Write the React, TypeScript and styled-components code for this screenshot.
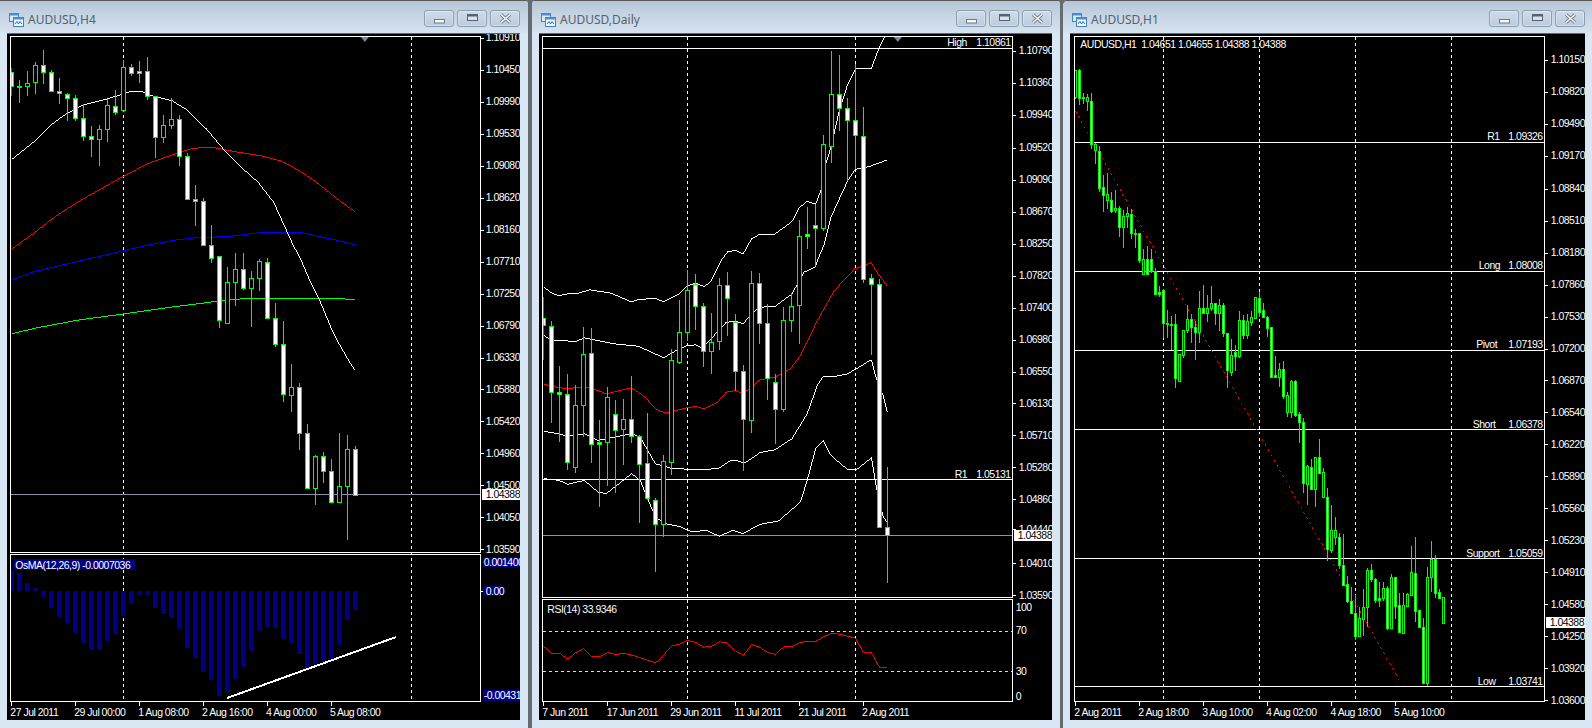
import styled, { createGlobalStyle } from 'styled-components';

type Candle = [high: number, low: number, top: number, bottom: number, filled: 0 | 1];
type Label = [text: string, y: number];
type TimeLabel = [text: string, x: number, tick: number];

const GREEN = '#00ff00';
const NAVY = '#000080';

// page y values, one row per bar
const h4Bars: Candle[] = [
  [67, 95, 71, 85, 1], [79, 102, 85, 86, 1], [70, 95, 82, 85, 0], [61, 93, 64, 81, 0],
  [49, 83, 64, 71, 1], [69, 91, 71, 90, 1], [77, 103, 90, 92, 1], [92, 120, 93, 97, 1],
  [94, 120, 97, 117, 1], [103, 140, 117, 135, 1], [125, 156, 135, 138, 1], [124, 165, 128, 138, 0],
  [98, 141, 104, 128, 0], [89, 114, 105, 111, 1], [59, 109, 66, 109, 0], [63, 75, 66, 72, 1],
  [60, 82, 70, 72, 1], [56, 99, 70, 95, 1], [95, 157, 95, 136, 1], [114, 142, 124, 136, 0],
  [97, 128, 118, 124, 0], [114, 165, 118, 155, 1], [152, 199, 155, 198, 1], [184, 225, 198, 200, 1],
  [197, 244, 200, 244, 1], [224, 262, 244, 257, 1], [255, 327, 255, 319, 1], [266, 322, 281, 322, 0],
  [252, 305, 268, 281, 0], [252, 289, 268, 287, 1], [270, 326, 277, 287, 0], [258, 290, 260, 277, 0],
  [257, 318, 261, 317, 1], [302, 346, 317, 343, 1], [320, 402, 343, 394, 1], [363, 412, 387, 395, 0],
  [383, 450, 387, 433, 1], [424, 488, 433, 488, 1], [455, 505, 456, 488, 0], [452, 483, 456, 471, 1],
  [459, 502, 471, 502, 1], [433, 503, 486, 502, 0], [435, 540, 449, 486, 0], [446, 495, 449, 495, 1],
];

const dailyBars: Candle[] = [
  [296, 359, 317, 324, 1], [320, 423, 325, 392, 1], [365, 442, 392, 394, 1], [373, 470, 394, 462, 1],
  [385, 473, 405, 467, 0], [326, 437, 353, 405, 0], [327, 463, 352, 444, 1], [420, 507, 442, 444, 1],
  [387, 486, 397, 442, 0], [400, 493, 414, 430, 1], [399, 465, 419, 429, 0], [375, 443, 419, 436, 1],
  [435, 523, 436, 464, 1], [413, 500, 463, 498, 1], [498, 572, 500, 524, 1], [455, 537, 461, 524, 0],
  [348, 475, 359, 462, 0], [299, 363, 331, 361, 0], [269, 340, 289, 331, 0], [273, 329, 283, 305, 1],
  [302, 366, 305, 350, 1], [312, 373, 341, 350, 0], [277, 349, 284, 340, 0], [271, 335, 284, 297, 1],
  [313, 391, 321, 370, 1], [364, 471, 370, 419, 1], [270, 433, 282, 420, 0], [272, 343, 282, 322, 1],
  [303, 400, 322, 378, 1], [373, 444, 382, 409, 1], [306, 412, 319, 409, 0], [292, 331, 305, 319, 0],
  [219, 343, 235, 304, 0], [206, 248, 233, 235, 1], [203, 265, 224, 227, 1], [134, 230, 143, 227, 0],
  [50, 162, 93, 145, 0], [54, 130, 93, 107, 1], [97, 180, 107, 119, 1], [63, 168, 119, 134, 1],
  [106, 282, 135, 278, 1], [273, 354, 277, 283, 1], [278, 527, 283, 527, 1], [467, 583, 527, 535, 1],
];

const hourBars: Candle[] = [
  [69, 98, 69, 96, 0], [68, 104, 69, 97, 1], [92, 103, 96, 97, 1], [93, 110, 96, 100, 0],
  [92, 148, 100, 143, 1], [142, 163, 143, 149, 0], [145, 191, 150, 187, 1], [174, 211, 186, 194, 1],
  [172, 208, 193, 199, 0], [191, 212, 199, 210, 1], [189, 212, 207, 209, 0], [205, 236, 207, 226, 1],
  [209, 247, 215, 226, 0], [206, 227, 212, 215, 0], [208, 238, 213, 232, 1], [228, 247, 232, 233, 1],
  [232, 262, 232, 259, 1], [248, 273, 258, 273, 0], [245, 273, 258, 273, 1], [248, 272, 258, 270, 1],
  [267, 293, 270, 293, 1], [285, 296, 291, 293, 1], [288, 337, 289, 322, 1], [309, 337, 322, 323, 1],
  [315, 349, 323, 324, 1], [313, 388, 323, 378, 1], [353, 381, 353, 381, 0], [329, 357, 329, 354, 0],
  [304, 332, 318, 329, 0], [313, 342, 318, 326, 1], [320, 359, 326, 331, 1], [290, 342, 307, 331, 0],
  [284, 312, 307, 312, 1], [294, 321, 307, 312, 0], [285, 310, 302, 307, 0], [302, 324, 302, 312, 1],
  [298, 330, 304, 312, 0], [302, 336, 304, 332, 1], [332, 388, 332, 369, 1], [338, 375, 354, 371, 0],
  [344, 370, 351, 355, 1], [310, 357, 319, 355, 0], [314, 338, 319, 334, 1], [313, 338, 320, 334, 0],
  [310, 325, 316, 321, 0], [296, 317, 296, 317, 0], [291, 316, 297, 311, 1], [302, 317, 309, 316, 1],
  [315, 336, 316, 327, 1], [326, 377, 326, 376, 1], [355, 377, 374, 377, 1], [362, 387, 368, 377, 0],
  [360, 399, 368, 396, 1], [392, 417, 395, 412, 0], [380, 418, 381, 412, 0], [380, 417, 381, 415, 1],
  [412, 443, 414, 422, 1], [418, 493, 422, 483, 1], [465, 505, 466, 484, 0], [459, 490, 467, 489, 1],
  [457, 507, 457, 489, 0], [439, 473, 457, 473, 1], [468, 498, 472, 497, 0], [488, 561, 497, 549, 1],
  [505, 553, 530, 550, 0], [517, 545, 530, 537, 0], [533, 569, 537, 565, 1], [534, 585, 565, 585, 1],
  [576, 603, 584, 601, 1], [587, 614, 601, 613, 1], [595, 640, 613, 636, 1], [607, 637, 618, 636, 0],
  [589, 636, 607, 619, 0], [568, 627, 570, 607, 0], [564, 582, 570, 579, 1], [578, 603, 579, 600, 1],
  [582, 607, 598, 600, 1], [582, 601, 588, 598, 0], [586, 630, 588, 628, 1], [574, 628, 577, 628, 0],
  [577, 619, 577, 606, 1], [593, 633, 605, 632, 1], [593, 634, 605, 633, 0], [593, 606, 594, 606, 0],
  [546, 595, 572, 595, 0], [537, 622, 573, 611, 1], [610, 627, 610, 627, 1], [618, 683, 627, 683, 1],
  [567, 686, 577, 683, 0], [541, 592, 559, 577, 0], [555, 598, 559, 593, 1], [589, 598, 592, 598, 1],
  [597, 624, 597, 623, 0],
];

// histogram ends, in thirds of a pixel below y=520
const osmaEnds = [
  150, 159, 189, 204, 231, 263, 291, 309, 339, 369, 389, 389, 363, 341, 287, 251, 225, 225, 263, 281, 293, 327,
  383, 413, 455, 479, 527, 515, 477, 441, 393, 333, 321, 323, 357, 369, 401, 445, 435, 425, 420, 375, 299, 269,
];

const rsiValues = [
  400, 400, 417, 398, 385, 409, 409, 397, 403, 400, 405, 412, 420, 428, 405, 378, 372, 361, 367, 381, 379, 365, 369,
  393, 405, 373, 381, 397, 403, 381, 378, 367, 364, 364, 350, 340, 342, 348, 354, 397, 397, 441, 441,
];

// traced from the reference at 3x vertically, slightly less across
const trace = (x0: number, xScale: number, y0: number, raw: number[]) => {
  const out: string[] = [];
  for (let i = 0; i < raw.length; i += 2) {
    out.push(`${(x0 + raw[i] / xScale).toFixed(1)},${(y0 + raw[i + 1] / 3).toFixed(1)}`);
  }
  return out.join(' ');
};

const h4 = (raw: number[]) => trace(0, 2.904, 0, raw);
const daily = (raw: number[]) => trace(530, 2.958, 0, raw);

const h4White = h4([
  33, 476, 95, 425, 150, 370, 190, 340, 240, 313, 300, 297, 350, 282, 380, 271, 410, 271, 440, 284, 500, 300, 540, 325,
  600, 385, 640, 435, 690, 490, 750, 545, 795, 605, 850, 730, 875, 780, 900, 840, 925, 890, 945, 940, 965, 990, 985,
  1030, 1010, 1075, 1030, 1108,
]);
const h4Red = h4([
  33, 745, 100, 695, 150, 655, 200, 620, 240, 595, 300, 560, 360, 525, 430, 488, 500, 462, 550, 445, 590, 439, 620, 440,
  680, 452, 760, 465, 820, 482, 870, 510, 920, 545, 980, 595, 1030, 632,
]);
const h4Blue = h4([
  33, 838, 100, 812, 235, 780, 350, 752, 430, 733, 510, 718, 580, 710, 660, 708, 770, 694, 830, 694, 880, 697, 960, 715,
  1030, 733,
]);
const h4Green = h4([
  33, 1000, 100, 983, 230, 958, 360, 940, 480, 922, 630, 902, 700, 895, 830, 893, 1000, 895, 1030, 898,
]);

const bandOuterTop = daily([
  40, 860, 65, 878, 85, 885, 110, 880, 135, 880, 175, 868, 240, 878, 300, 904, 320, 897, 370, 893, 395, 904, 440, 880,
  465, 855, 490, 848, 515, 858, 535, 842, 565, 780, 585, 752, 610, 750, 630, 760, 655, 715, 680, 700, 725, 700, 775,
  662, 797, 620, 820, 602, 845, 610, 862, 565, 875, 490, 890, 440, 915, 330, 940, 250, 963, 203, 1010, 203, 1035, 135,
  1050, 105,
]);
const bandInnerTop = daily([
  40, 1005, 65, 1020, 135, 1022, 160, 1012, 200, 1020, 250, 1030, 320, 1037, 395, 1072, 440, 1045, 465, 1035, 490, 1033,
  510, 1043, 535, 1015, 580, 965, 610, 962, 630, 970, 655, 940, 680, 920, 725, 917, 775, 880, 810, 815, 845, 798, 850,
  780, 870, 732, 890, 650, 915, 595, 940, 540, 963, 505, 1010, 495, 1056, 478,
]);
const bandMiddle = daily([
  40, 1151, 65, 1158, 110, 1165, 160, 1158, 200, 1170, 225, 1180, 300, 1162, 340, 1190, 370, 1225, 400, 1238, 465, 1222,
  490, 1218, 515, 1225, 555, 1205, 580, 1175, 610, 1170, 630, 1180, 660, 1155, 680, 1138, 725, 1130, 770, 1105, 800,
  1065, 850, 960, 900, 870, 960, 805, 1010, 786, 1030, 820, 1056, 855,
]);
const bandInnerLow = daily([
  40, 1293, 85, 1300, 110, 1308, 160, 1300, 200, 1320, 250, 1310, 300, 1300, 325, 1310, 370, 1390, 420, 1405, 520, 1408,
  560, 1403, 590, 1382, 610, 1380, 635, 1388, 680, 1357, 725, 1348, 775, 1315, 820, 1240, 850, 1155, 868, 1127, 900,
  1128, 940, 1120, 990, 1090, 1010, 1077, 1025, 1135, 1045, 1185, 1057, 1235,
]);
const bandOuterLow = daily([
  40, 1435, 85, 1440, 110, 1452, 160, 1440, 200, 1475, 225, 1480, 300, 1420, 325, 1440, 370, 1550, 400, 1570, 440, 1578,
  480, 1595, 520, 1590, 560, 1608, 600, 1590, 630, 1600, 680, 1572, 735, 1562, 800, 1505, 820, 1440, 845, 1345, 868,
  1320, 890, 1365, 940, 1408, 963, 1408, 1010, 1370, 1025, 1460, 1045, 1550, 1057, 1565,
]);

const GlobalStyle = createGlobalStyle`
  html, body {
    margin: 0;
    padding: 0;
    background: #d9e6f3;
    overflow: hidden;
  }
`;

const Desktop = styled.div`
  width: 1592px;
  height: 728px;
  display: flex;
  overflow: hidden;
`;

const Divider = styled.div<{ $width: number }>`
  position: relative;
  flex: 0 0 ${(p) => p.$width}px;
  background: #646c72;
  &::before {
    content: '';
    position: absolute;
    top: 0;
    left: 50%;
    margin-left: -4px;
    border-style: solid;
    border-width: 5px 4px 0;
    border-color: #646c72 transparent transparent;
  }
`;

const Window = styled.section<{ $width: number; $left: number; $right: number }>`
  flex: 0 0 ${(p) => p.$width}px;
  height: 728px;
  box-sizing: border-box;
  display: flex;
  flex-direction: column;
  padding: 0 ${(p) => p.$right}px 8px ${(p) => p.$left}px;
  background: #d9e6f3;
  border-top: 1px solid #5b5b5b;
`;

const TitleBar = styled.header<{ $left: number; $right: number }>`
  flex: 0 0 32px;
  display: flex;
  align-items: center;
  margin: 0 -${(p) => p.$right}px 0 -${(p) => p.$left}px;
  padding: 5px ${(p) => p.$right}px 0 ${(p) => p.$left - 5}px;
  box-sizing: border-box;
  background: linear-gradient(#b7c6d6, #c6d4e3 45%, #d6e4f1);
`;

const TitleIcon = styled.svg`
  flex: none;
  width: 15px;
  height: 14px;
  margin: 0 4px 0 7px;
`;

const Title = styled.span`
  flex: 1;
  font: 12px 'Noto Sans', sans-serif;
  color: #56616d;
`;

const CaptionButtons = styled.div`
  display: flex;
  gap: 3px;
  margin-top: -3px;
`;

const CaptionButton = styled.div`
  width: 30px;
  height: 17px;
  box-sizing: border-box;
  display: flex;
  align-items: center;
  justify-content: center;
  border: 1px solid #8c9db0;
  border-radius: 3px;
  background: linear-gradient(#cfdbe8, #bccbdc);
  box-shadow: inset 0 0 0 1px rgba(255, 255, 255, 0.35);
`;

const CaptionGlyph = styled.svg`
  width: 13px;
  height: 11px;
`;

const ChartCanvas = styled.svg<{ $width: number }>`
  display: block;
  width: ${(p) => p.$width}px;
  height: 687px;
  background: #000;
  border-top: 1px solid #666;
  box-sizing: content-box;
  text {
    font-family: 'Liberation Sans', Arial, sans-serif;
    font-size: 10.5px;
    letter-spacing: -0.5px;
    fill: #fff;
    dominant-baseline: central;
  }
`;

const TagText = styled.text`
  && {
    fill: #000;
  }
`;

const Edge = styled.rect`
  fill: none;
  stroke: #fff;
  shape-rendering: crispEdges;
`;

const Rule = styled.line<{ $color?: string; $dashed?: boolean; $width?: number }>`
  stroke: ${(p) => p.$color || '#fff'};
  stroke-width: ${(p) => p.$width || 1};
  stroke-dasharray: ${(p) => (p.$dashed ? '3 3' : 'none')};
  shape-rendering: crispEdges;
`;

const TrendLine = styled.line`
  stroke: #ff0000;
  stroke-dasharray: 2 4;
  shape-rendering: crispEdges;
`;

const Trace = styled.polyline<{ $color: string }>`
  fill: none;
  stroke: ${(p) => p.$color};
  stroke-width: 1;
  shape-rendering: crispEdges;
`;

const Wick = styled.line`
  stroke: ${GREEN};
  shape-rendering: crispEdges;
`;

const Body = styled.rect<{ $filled: boolean }>`
  fill: ${(p) => (p.$filled ? '#fff' : '#000')};
  stroke: ${GREEN};
  shape-rendering: crispEdges;
`;

const Block = styled.rect<{ $color: string }>`
  fill: ${(p) => p.$color};
  shape-rendering: crispEdges;
`;

const Marker = styled.polygon`
  fill: #76879a;
`;

function Bars({ data, first, step, half }: { data: Candle[]; first: number; step: number; half: number }) {
  return (
    <>
      {data.map(([high, low, top, bottom, filled], i) => {
        const x = first + step * i;
        return (
          <g key={i}>
            <Wick x1={x} x2={x} y1={high} y2={low} />
            <Body x={x - half} y={top + 0.5} width={half * 2} height={Math.max(bottom - top, 1)} $filled={!!filled} />
          </g>
        );
      })}
    </>
  );
}

function PriceAxis({ left, right, labels }: { left: number; right: number; labels: Label[] }) {
  return (
    <>
      {labels.map(([text, y]) => (
        <g key={text}>
          <Rule x1={right} x2={right + 4} y1={y + 0.5} y2={y + 0.5} />
          <text x={left} y={y}>
            {text}
          </text>
        </g>
      ))}
    </>
  );
}

function TimeAxis({ labels }: { labels: TimeLabel[] }) {
  return (
    <>
      {labels.map(([text, x, tick]) => (
        <g key={text}>
          <Rule x1={tick} x2={tick} y1={702} y2={706} />
          <text x={x} y={712}>
            {text}
          </text>
        </g>
      ))}
    </>
  );
}

function Level({ left, right, y, name, nameX, value, valueX }: {
  left: number; right: number; y: number; name: string; nameX: number; value: string; valueX: number;
}) {
  return (
    <>
      <Rule x1={left} x2={right} y1={y + 0.5} y2={y + 0.5} />
      <text x={nameX} y={y - 5}>
        {name}
      </text>
      <text x={valueX} y={y - 5} textAnchor="end">
        {value}
      </text>
    </>
  );
}

function PriceTag({ x, y, width, text }: { x: number; y: number; width: number; text: string }) {
  return (
    <>
      <Block x={x} y={y} width={width} height={11} $color="#fff" />
      <TagText x={x + 4} y={y + 5.5}>
        {text}
      </TagText>
    </>
  );
}

function H4Chart() {
  return (
    <ChartCanvas $width={513} viewBox="7 33 513 687">
      <defs>
        <clipPath id="h4-clip">
          <rect x={11} y={36} width={469} height={516} />
        </clipPath>
      </defs>
      {[123.5, 411.5].map((x) => (
        <Rule key={x} x1={x} x2={x} y1={36} y2={702} $dashed />
      ))}
      <Rule x1={10} x2={480} y1={494.5} y2={494.5} $color="#8b94a6" />
      <Trace points={h4Green} $color={GREEN} />
      <Trace points={h4Blue} $color="#0000ff" />
      <Trace points={h4Red} $color="#ff0000" />
      <Trace points={h4White} $color="#fff" />
      <g clipPath="url(#h4-clip)">
        <Bars data={h4Bars} first={11.5} step={8} half={2} />
      </g>
      <Marker points="361,36 369,36 365,41" />
      <Edge x={10.5} y={35.5} width={470} height={517} />
      <Edge x={10.5} y={554.5} width={470} height={147} />
      <PriceAxis
        left={486}
        right={480}
        labels={[
          ['1.10910', 37], ['1.10450', 69], ['1.09990', 101], ['1.09530', 133], ['1.09080', 165], ['1.08620', 197],
          ['1.08160', 229], ['1.07710', 261], ['1.07250', 293], ['1.06790', 325], ['1.06330', 357], ['1.05880', 389],
          ['1.05420', 421], ['1.04960', 453], ['1.04500', 485], ['1.04050', 517], ['1.03590', 549],
        ]}
      />
      <PriceTag x={482} y={489} width={38} text="1.04388" />
      {osmaEnds.map((end, i) => {
        const x = 9 + 8 * i;
        const y = 520 + end / 3;
        const up = y < 591;
        return (
          <Block key={x} x={i === 0 ? 11 : x} y={up ? y : 591} width={i === 0 ? 3 : 5} height={Math.abs(y - 591)} $color={NAVY} />
        );
      })}
      <Block x={14} y={559} width={121} height={11} $color={NAVY} />
      <text x={15} y={565}>
        OsMA(12,26,9) -0.0007036
      </text>
      <Rule x1={227} x2={396} y1={698} y2={637} $width={2} />
      <Block x={483} y={557} width={37} height={10} $color={NAVY} />
      <text x={484} y={562}>
        0.001400
      </text>
      <Rule x1={480} x2={484} y1={591.5} y2={591.5} />
      <Block x={483} y={586} width={20} height={10} $color={NAVY} />
      <text x={486} y={591}>
        0.00
      </text>
      <Block x={483} y={690} width={37} height={11} $color={NAVY} />
      <text x={484} y={695.5}>
        -0.00431
      </text>
      <TimeAxis
        labels={[
          ['27 Jul 2011', 10, 11.5], ['29 Jul 00:00', 74, 75.5], ['1 Aug 08:00', 138, 139.5],
          ['2 Aug 16:00', 202, 203.5], ['4 Aug 00:00', 266, 267.5], ['5 Aug 08:00', 330, 331.5],
        ]}
      />
    </ChartCanvas>
  );
}

function DailyChart() {
  const rsi = rsiValues.map((v, i) => `${551.5 + 8 * i},${520 + v / 3}`).join(' ');
  return (
    <ChartCanvas $width={513} viewBox="539 33 513 687">
      <defs>
        <clipPath id="daily-clip">
          <rect x={543} y={36} width={469} height={561} />
        </clipPath>
      </defs>
      {[687.5, 855.5].map((x) => (
        <Rule key={x} x1={x} x2={x} y1={36} y2={702} $dashed />
      ))}
      <Level left={542} right={1012} y={47} name="High" nameX={947.5} value="1.10861" valueX={1011} />
      <Level left={542} right={1012} y={479} name="R1" nameX={955} value="1.05131" valueX={1011} />
      <Rule x1={542} x2={1012} y1={535.5} y2={535.5} $color="#8b94a6" />
      <g clipPath="url(#daily-clip)">
        <Trace points={bandOuterTop} $color="#fff" />
        <Trace points={bandInnerTop} $color="#fff" />
        <Trace points={bandMiddle} $color="#ff0000" />
        <Trace points={bandInnerLow} $color="#fff" />
        <Trace points={bandOuterLow} $color="#fff" />
        <Bars data={dailyBars} first={543.5} step={8} half={2} />
      </g>
      <Marker points="894,36 902,36 898,41" />
      <Edge x={542.5} y={35.5} width={470} height={562} />
      <Edge x={542.5} y={599.5} width={470} height={102} />
      <PriceAxis
        left={1019}
        right={1012}
        labels={[
          ['1.10790', 50], ['1.10360', 82], ['1.09940', 114], ['1.09520', 147], ['1.09090', 179], ['1.08670', 211],
          ['1.08250', 243], ['1.07820', 275], ['1.07400', 307], ['1.06980', 339], ['1.06550', 371], ['1.06130', 403],
          ['1.05710', 435], ['1.05280', 467], ['1.04860', 499], ['1.04440', 529], ['1.04010', 563], ['1.03590', 595],
        ]}
      />
      <PriceTag x={1014} y={530} width={38} text="1.04388" />
      <Rule x1={543} x2={1012} y1={631.5} y2={631.5} $dashed $color="#ddd" />
      <Rule x1={543} x2={1012} y1={671.5} y2={671.5} $dashed $color="#ddd" />
      <Trace points={`543,646 ${rsi}`} $color="#ff0000" />
      <text x={547} y={609}>
        RSI(14) 33.9346
      </text>
      <text x={1016} y={607}>
        100
      </text>
      <text x={1016} y={630}>
        70
      </text>
      <text x={1016} y={671}>
        30
      </text>
      <text x={1016} y={696}>
        0
      </text>
      <TimeAxis
        labels={[
          ['7 Jun 2011', 542, 543.5], ['17 Jun 2011', 606.5, 607.5], ['29 Jun 2011', 670, 671.5],
          ['11 Jul 2011', 734.5, 735.5], ['21 Jul 2011', 798.5, 799.5], ['2 Aug 2011', 862, 863.5],
        ]}
      />
    </ChartCanvas>
  );
}

function HourChart() {
  return (
    <ChartCanvas $width={515} viewBox="1070 33 515 687">
      {[1163.5, 1259.5, 1355.5, 1451.5].map((x) => (
        <Rule key={x} x1={x} x2={x} y1={36} y2={702} $dashed />
      ))}
      <Level left={1074} right={1544} y={141} name="R1" nameX={1487.5} value="1.09326" valueX={1543} />
      <Level left={1074} right={1544} y={270} name="Long" nameX={1479} value="1.08008" valueX={1543} />
      <Level left={1074} right={1544} y={349} name="Pivot" nameX={1476.5} value="1.07193" valueX={1543} />
      <Level left={1074} right={1544} y={429} name="Short" nameX={1473} value="1.06378" valueX={1543} />
      <Level left={1074} right={1544} y={558} name="Support" nameX={1466.5} value="1.05059" valueX={1543} />
      <Level left={1074} right={1544} y={686} name="Low" nameX={1478} value="1.03741" valueX={1543} />
      <TrendLine x1={1075} x2={1401} y1={110} y2={683} />
      <Bars data={hourBars} first={1075.5} step={4} half={1} />
      <Edge x={1074.5} y={35.5} width={470} height={666} />
      <text x={1080} y={43.5}>
        AUDUSD,H1&nbsp;&nbsp;1.04651 1.04655 1.04388 1.04388
      </text>
      <PriceAxis
        left={1551}
        right={1544}
        labels={[
          ['1.10150', 59], ['1.09820', 91], ['1.09490', 123], ['1.09170', 155], ['1.08840', 188], ['1.08510', 220],
          ['1.08180', 252], ['1.07860', 284], ['1.07530', 316], ['1.07200', 348], ['1.06870', 380], ['1.06540', 412],
          ['1.06220', 444], ['1.05890', 476], ['1.05560', 508], ['1.05230', 540], ['1.04910', 572], ['1.04580', 604],
          ['1.04250', 636], ['1.03920', 668], ['1.03600', 700],
        ]}
      />
      <PriceTag x={1546} y={617} width={39} text="1.04388" />
      <TimeAxis
        labels={[
          ['2 Aug 2011', 1074, 1075.5], ['2 Aug 18:00', 1138, 1139.5], ['3 Aug 10:00', 1202, 1203.5],
          ['4 Aug 02:00', 1266, 1267.5], ['4 Aug 18:00', 1330.5, 1331.5], ['5 Aug 10:00', 1394, 1395.5],
        ]}
      />
    </ChartCanvas>
  );
}

function ChartIcon() {
  return (
    <TitleIcon viewBox="0 0 15 14">
      <rect x="0.5" y="0.5" width="9" height="8" fill="#d9ecfb" stroke="#3f7fc4" />
      <rect x="0.5" y="0.5" width="9" height="2" fill="#4d8fd6" />
      <rect x="4.5" y="4.5" width="10" height="9" fill="#eef7ff" stroke="#3f7fc4" />
      <rect x="4.5" y="4.5" width="10" height="2" fill="#4d8fd6" />
      <path d="M6 11 L8 8.5 L9.5 11 L11 8.5 L13 11" fill="none" stroke="#2e6db0" />
    </TitleIcon>
  );
}

function Caption({ title, left, right }: { title: string; left: number; right: number }) {
  return (
    <TitleBar $left={left} $right={right}>
      <ChartIcon />
      <Title>{title}</Title>
      <CaptionButtons>
        <CaptionButton>
          <CaptionGlyph viewBox="0 0 13 11">
            <rect x="1.5" y="6.5" width="10" height="3.5" fill="#f4f7fa" stroke="#6d7a87" />
          </CaptionGlyph>
        </CaptionButton>
        <CaptionButton>
          <CaptionGlyph viewBox="0 0 13 11">
            <rect x="1.5" y="1.5" width="10" height="6" fill="#d8e2ec" stroke="#56626e" />
            <rect x="2" y="2" width="9" height="1.5" fill="#56626e" />
          </CaptionGlyph>
        </CaptionButton>
        <CaptionButton>
          <CaptionGlyph viewBox="0 0 13 11">
            <path d="M2 1.5 L11 9.5 M11 1.5 L2 9.5" stroke="#6d7a87" strokeWidth="3.2" />
            <path d="M2 1.5 L11 9.5 M11 1.5 L2 9.5" stroke="#f4f7fa" strokeWidth="1.6" />
          </CaptionGlyph>
        </CaptionButton>
      </CaptionButtons>
    </TitleBar>
  );
}

export default function App() {
  return (
    <>
      <GlobalStyle />
      <Desktop>
        <Window $width={528} $left={7} $right={8}>
          <Caption title="AUDUSD,H4" left={7} right={8} />
          <H4Chart />
        </Window>
        <Divider $width={4} />
        <Window $width={528} $left={7} $right={8}>
          <Caption title="AUDUSD,Daily" left={7} right={8} />
          <DailyChart />
        </Window>
        <Divider $width={3} />
        <Window $width={529} $left={7} $right={7}>
          <Caption title="AUDUSD,H1" left={7} right={7} />
          <HourChart />
        </Window>
      </Desktop>
    </>
  );
}
